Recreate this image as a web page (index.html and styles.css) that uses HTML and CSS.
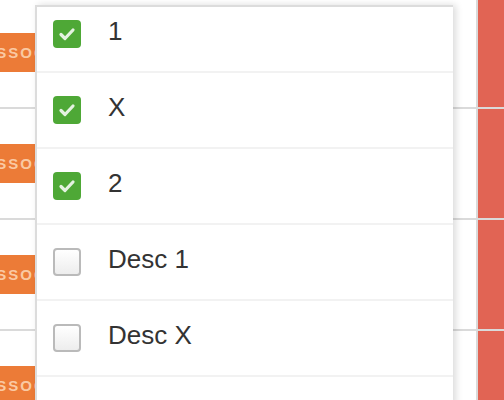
FILE: index.html
```html
<!DOCTYPE html>
<html>
<head>
<meta charset="utf-8">
<link rel="stylesheet" href="styles.css">
</head>
<body>
<div class="table">
  <div class="trow"><div class="c1"><span class="badge"><span class="btext">ASSOC</span></span></div><div class="c2"></div><div class="c3"></div></div>
  <div class="trow"><div class="c1"><span class="badge"><span class="btext">ASSOC</span></span></div><div class="c2"></div><div class="c3"></div></div>
  <div class="trow"><div class="c1"><span class="badge"><span class="btext">ASSOC</span></span></div><div class="c2"></div><div class="c3"></div></div>
  <div class="trow"><div class="c1"><span class="badge"><span class="btext">ASSOC</span></span></div><div class="c2"></div><div class="c3"></div></div>
</div>
<div class="panel">
  <ul class="list">
    <li class="item"><span class="box checked"><svg viewBox="0 0 28 28" width="28" height="28"><path d="M8 14.5 L12 18.5 L20 10" /></svg></span><span class="label">1</span></li>
    <li class="item"><span class="box checked"><svg viewBox="0 0 28 28" width="28" height="28"><path d="M8 14.5 L12 18.5 L20 10" /></svg></span><span class="label">X</span></li>
    <li class="item"><span class="box checked"><svg viewBox="0 0 28 28" width="28" height="28"><path d="M8 14.5 L12 18.5 L20 10" /></svg></span><span class="label">2</span></li>
    <li class="item"><span class="box"></span><span class="label">Desc 1</span></li>
    <li class="item"><span class="box"></span><span class="label">Desc X</span></li>
    <li class="item"><span class="box"></span><span class="label">Desc 2</span></li>
  </ul>
</div>
</body>
</html>
```
FILE: styles.css
```css
html, body {
  margin: 0;
  padding: 0;
  background: #fff;
  width: 504px;
  height: 400px;
  overflow: hidden;
  font-family: "Liberation Sans", Arial, Helvetica, sans-serif;
}
.table {
  margin-top: -2px;
  display: flex;
  flex-direction: column;
}
.trow {
  display: flex;
  height: 109px;
  border-bottom: 2px solid #dadada;
}
.c1 {
  width: 35px;
  overflow: hidden;
  padding-top: 35px;
  box-sizing: border-box;
}
.badge {
  display: block;
  width: 35px;
  height: 39px;
  background: #ec7b37;
  overflow: hidden;
  white-space: nowrap;
}
.btext {
  display: block;
  margin-left: -16.5px;
  line-height: 39px;
  font-size: 15px;
  font-weight: bold;
  letter-spacing: 2px;
  color: rgba(255, 228, 200, 0.75);
}
.c2 {
  flex: 1;
}
.c3 {
  width: 26px;
  border-left: 2px solid #dadada;
  background: #e16454;
}
.panel {
  position: absolute;
  left: 35px;
  top: 5px;
  width: 416px;
  height: 400px;
  background: #fff;
  border-left: 2px solid #dcdcdc;
  border-top: 2px solid #dcdcdc;
  box-shadow: 3px 0 7px rgba(0, 0, 0, 0.14);
  overflow: hidden;
}
.list {
  list-style: none;
  margin: -10px 0 0 0;
  padding: 0;
}
.item {
  display: flex;
  align-items: center;
  height: 74px;
  border-bottom: 2px solid #f2f2f2;
  padding-left: 16px;
}
.box {
  width: 28px;
  height: 28px;
  box-sizing: border-box;
  border-radius: 4px;
  border: 2px solid #bababa;
  background: linear-gradient(#ffffff, #ededed);
  flex: none;
}
.box.checked {
  border: none;
  background: #4ea836;
}
.box svg {
  display: block;
}
.box path {
  fill: none;
  stroke: rgba(255, 255, 255, 0.85);
  stroke-width: 3.2;
  stroke-linecap: round;
  stroke-linejoin: round;
}
.label {
  margin-left: 27px;
  margin-bottom: 5px;
  font-size: 26px;
  color: #333;
}
```
